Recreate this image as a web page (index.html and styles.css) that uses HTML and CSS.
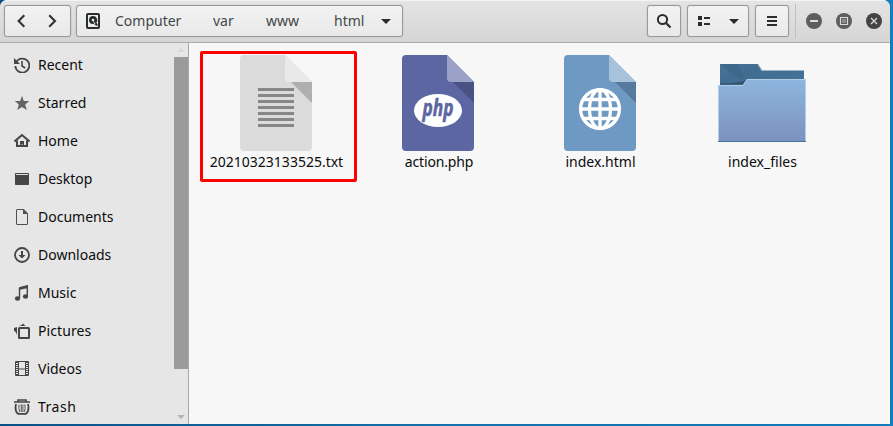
FILE: index.html
```html
<!DOCTYPE html>
<html lang="en">
<head>
<meta charset="utf-8">
<title>html</title>
<link rel="stylesheet" href="styles.css">
</head>
<body>
<main class="window">
  <header class="toolbar">
    <div class="group nav">
      <svg width="66" height="32" viewBox="0 0 66 32"><path d="M20.300 10.200 14.600 16l5.700 5.800M45.200 10.200 51 16l-5.800 5.800" fill="none" stroke="#2e3436" stroke-width="2.100"/></svg>
    </div>
    <nav class="group path">
      <svg class="disk" width="14" height="16" viewBox="0 0 14 16"><rect x="1" y="1" width="12" height="14" rx="1" fill="none" stroke="#292d2e" stroke-width="2"/><path d="M7 3a4 4 0 1 0 0 8l1-.1L10.500 13l1.400-1-1.500-2.500A4 4 0 0 0 7 3Z" fill="#292d2e"/><circle cx="7" cy="7" r="1.300" fill="#ededed"/><path d="m7.500 8.500 1.700 2.700" stroke="#ededed"/></svg>
      <span class="crumb computer">Computer</span><span class="crumb var">var</span><span class="crumb www">www</span><span class="crumb html">html</span>
      <svg class="arrow" width="10" height="5" viewBox="0 0 10 5"><path d="M0 0h10L5 5Z" fill="#292d2e"/></svg>
    </nav>
    <div class="group search"><svg width="16" height="16" viewBox="0 0 16 16"><circle cx="6.500" cy="6.500" r="4.600" fill="none" stroke="#292d2e" stroke-width="2"/><path d="m10 10 4.500 4.500" stroke="#292d2e" stroke-width="2.200"/></svg></div>
    <div class="group view">
      <svg width="12" height="10" viewBox="0 0 12 10"><path d="M0 0h4v4H0zM0 6h4v4H0zM6 1h6v2H6zM6 7h6v2H6z" fill="#292d2e"/></svg>
      <svg width="10" height="5" viewBox="0 0 10 5"><path d="M0 0h10L5 5Z" fill="#292d2e"/></svg>
    </div>
    <div class="group menu"><svg width="10" height="10" viewBox="0 0 10 10"><path d="M0 0h10v2H0zM0 4h10v2H0zM0 8h10v2H0z" fill="#292d2e"/></svg></div>
    <div class="controls">
      <svg width="16" height="16"><circle cx="8" cy="8" r="8" fill="#5d5d5d"/><path d="M4 7h8v2H4z" fill="#dcdcdc"/></svg>
      <svg width="16" height="16"><circle cx="8" cy="8" r="8" fill="#5d5d5d"/><path d="M4.500 4.500h7v7h-7z" fill="none" stroke="#dcdcdc" stroke-width="1.200"/><path d="M6 6h4v4H6z" fill="#8c8c8c"/></svg>
      <svg width="16" height="16"><circle cx="8" cy="8" r="8" fill="#444"/><path d="m5 5 6 6m0-6-6 6" stroke="#dcdcdc" stroke-width="1.300"/></svg>
    </div>
  </header>
  <div class="content">
    <aside class="sidebar">
      <ul class="places">
        <li><svg width="16" height="16" viewBox="0 0 16 16"><path d="M2 5.500A7 7 0 1 1 1.300 9" fill="none" stroke="#464646" stroke-width="1.800"/><path d="M0 1v6h6Z" fill="#464646"/><path d="M8 4v5l3.200 2" fill="none" stroke="#464646" stroke-width="1.600"/></svg><span>Recent</span></li>
        <li><svg width="16" height="16" viewBox="0 0 16 16"><path d="m8 .8 1.800 5.200 5.400.1L11.200 9.500l1.600 5.500L8 11.900 3.200 15l1.600-5.500L.8 6.100 6.200 6Z" fill="#646464"/></svg><span>Starred</span></li>
        <li><svg width="16" height="16" viewBox="0 0 16 16"><path d="M.5 8.500 8 2l7.500 6.500" fill="none" stroke="#464646" stroke-width="2"/><path d="M3 7.500V13h10V7.500" fill="none" stroke="#464646" stroke-width="2"/><path d="M6 8h4v5H8.500v-2h-1v2H6z" fill="#464646"/></svg><span>Home</span></li>
        <li><svg width="16" height="16" viewBox="0 0 16 16"><rect x="1" y="2" width="14" height="12" rx=".8" fill="#464646"/><path d="M2 3.500h12" stroke="#ddd"/></svg><span>Desktop</span></li>
        <li><svg width="16" height="16" viewBox="0 0 16 16"><path d="M3 .5h7l3.500 4V15q0 .5-.5.5H3q-.5 0-.5-.5V1q0-.5.5-.5Z" fill="none" stroke="#505050"/><path d="M9 0v5h5Z" fill="#505050"/></svg><span>Documents</span></li>
        <li><svg width="16" height="16" viewBox="0 0 16 16"><circle cx="8" cy="8" r="7" fill="none" stroke="#464646" stroke-width="1.800"/><path d="M7 4h2v4h2.500L8 11.500 4.500 8H7z" fill="#464646"/></svg><span>Downloads</span></li>
        <li><svg width="16" height="16" viewBox="0 0 16 16"><path d="M5.500 13V3.400L13.300 1v10.500" fill="none" stroke="#464646" stroke-width="1.400"/><path d="M5 2.200 14 0v3L5 5Z" fill="#464646"/><ellipse cx="3.500" cy="13.500" rx="2.600" ry="2.200" fill="#464646"/><ellipse cx="11.500" cy="11.500" rx="2.600" ry="2.200" fill="#464646"/></svg><span>Music</span></li>
        <li><svg width="16" height="16" viewBox="0 0 16 16"><rect x="5" y="5" width="10" height="10" rx=".5" fill="none" stroke="#464646" stroke-width="2"/><path d="M5 3q3-1 4-2.500L11.500 3ZM3 4v8Q2.500 9 0 7.500V5Z" fill="#464646"/></svg><span class="wide">Pictures</span></li>
        <li><svg width="16" height="16" viewBox="0 0 16 16"><path d="M1.500.5h13v14h-13zM4.500 1v14m7-14v14m-7-7h7" fill="none" stroke="#464646"/><path d="M3 1v14m10-14v14" stroke="#464646" stroke-width="2" stroke-dasharray="1 1"/></svg><span>Videos</span></li>
        <li><svg width="16" height="16" viewBox="0 0 16 16"><path d="M0 3h16M4 2.500V1h8v1.500" fill="none" stroke="#464646" stroke-width="1.600"/><path d="M2 5q-1.600 7 2 9.800h8q3.600-2.800 2-9.800" fill="none" stroke="#464646" stroke-width="1.800"/><path d="M5.200 5.500q-1 4 .6 7.500M10.800 5.500q1 4-.6 7.500M7.300 5.500V13M8.900 5.500V13" fill="none" stroke="#464646" stroke-width=".9"/></svg><span class="trash">Trash</span></li>
      </ul>
      <div class="scrollbar">
        <svg width="8" height="4"><path d="M0 4h8L4 0Z" fill="#d7d7d7"/></svg>
        <div class="thumb"></div>
        <svg width="8" height="4"><path d="M0 0h8L4 4Z" fill="#b5b5b5"/></svg>
      </div>
    </aside>
    <section class="files">
      <article class="file selected">
        <svg width="72" height="96" viewBox="0 0 72 96"><path d="M4 0h41l27 27v65a4 4 0 0 1-4 4H4a4 4 0 0 1-4-4V4a4 4 0 0 1 4-4Z" fill="#dbdbdb"/><path d="M51 27h21v21Z" fill="#afafaf"/><path d="M45 0l27 27H49a4 4 0 0 1-4-4Z" fill="#e9e9e9"/><path d="M18 34.500h36m-36 6h36m-36 6h36m-36 6h36m-36 6h36m-36 6h36m-36 6h36" stroke="#878787" stroke-width="3"/></svg>
        <span>20210323133525.txt</span>
      </article>
      <article class="file">
        <svg width="72" height="96" viewBox="0 0 72 96"><path d="M4 0h41l27 27v65a4 4 0 0 1-4 4H4a4 4 0 0 1-4-4V4a4 4 0 0 1 4-4Z" fill="#5b66a3"/><path d="M51 27h21v21Z" fill="#495282"/><path d="M45 0l27 27H49a4 4 0 0 1-4-4Z" fill="#9ba2c7"/><ellipse cx="36" cy="55.500" rx="24" ry="16.500" fill="#fff"/><text x="36" y="60.500" text-anchor="middle" class="php" textLength="31" lengthAdjust="spacingAndGlyphs">php</text></svg>
        <span class="tight">action.php</span>
      </article>
      <article class="file">
        <svg width="72" height="96" viewBox="0 0 72 96"><path d="M4 0h41l27 27v65a4 4 0 0 1-4 4H4a4 4 0 0 1-4-4V4a4 4 0 0 1 4-4Z" fill="#6e99c3"/><path d="M51 27h21v21Z" fill="#587a9c"/><path d="M45 0l27 27H49a4 4 0 0 1-4-4Z" fill="#a8c2db"/><g fill="none" stroke="#fff" stroke-width="3.300"><circle cx="36" cy="54" r="19.400"/><ellipse cx="36" cy="54" rx="10.500" ry="19.500"/><path d="M36 35v38M20 44.500h32M17 54h38M20 63.500h32"/></g></svg>
        <span>index.html</span>
      </article>
      <article class="file">
        <svg width="88" height="96" viewBox="0 0 88 96"><defs><linearGradient id="front" x2="0" y2="1"><stop stop-color="#8eb6de"/><stop offset="1" stop-color="#7b91bd"/></linearGradient><linearGradient id="back" x2="1" y2="1"><stop stop-color="#47749a"/><stop offset=".3" stop-color="#416d92"/><stop offset="1" stop-color="#47749a"/></linearGradient></defs><path d="M2 9h38l4 6h42v25H2Z" fill="url(#back)"/><path d="M2 9l20 15 4-1-6-14Z" fill="#3f6789"/><path d="M40 9.500l3.500 6H86" fill="none" stroke="#9ab5ca"/><path d="M2 29.500h23l4-5-5 2q-11 2-22 2Z" fill="#35566f"/><path d="M0 30h25l4-6h59v63H0Z" fill="url(#front)"/><path d="M.5 87V30.500H25l4-6h58.500V87" fill="none" stroke="#b2cde7"/><path d="M0 86.500h88" stroke="#4a709f"/></svg>
        <span>index_files</span>
      </article>
    </section>
  </div>
</main>
</body>
</html>
```
FILE: styles.css
```css
* { box-sizing: border-box; }
body { margin: 0; height: 426px; overflow: hidden; background: linear-gradient(90deg, #0b5288, #1876b0 50%, #1580c0); font: 14px/20px "Noto Sans", sans-serif; color: #0c0c0c; }
svg { display: block; flex: none; }
.window { display: flex; flex-direction: column; width: 890px; height: 424px; background: #f7f7f7; border-radius: 7px 7px 0 0; overflow: hidden; box-shadow: 0 0 1px #003b61; }
.toolbar { display: flex; flex: none; height: 43px; padding: 4px 0 0 4px; background: linear-gradient(#e4e4e4, #d5d5d5); border-top: 1px solid #f4f4f4; border-bottom: 1px solid #aaa; }
.group { display: flex; align-items: center; flex: none; height: 32px; border: 1px solid #999; border-radius: 3px; background: linear-gradient(#f2f2f2, #e9e9e9); box-shadow: 0 0 1px #888; }
.nav { width: 67px; }
.nav svg { margin-left: -1px; }
.path { width: 327px; margin-left: 5px; padding-left: 9px; color: #434748; }
.crumb { white-space: nowrap; }
.computer { width: 98px; margin-left: 15px; }
.var { width: 53px; }
.www { width: 68px; }
.html { width: 47px; }
.search { width: 34px; margin-left: 244px; justify-content: center; }
.view { width: 62px; margin-left: 6px; padding-left: 10px; gap: 19px; }
.menu { width: 34px; margin-left: 6px; justify-content: center; }
.controls { display: flex; align-items: center; gap: 14px; height: 34px; margin: -1px 0 0 6px; padding-left: 10px; border-left: 1px solid #c0c0c0; }
.content { display: flex; flex: 1; min-height: 0; }
.sidebar { display: flex; width: 189px; background: #e6e6e6; border-right: 1px solid #a7a7a7; }
.places { flex: 1; list-style: none; margin: 0; padding: 3px 0 0 14px; }
.places li { display: flex; align-items: center; gap: 8px; height: 38px; }
.wide { letter-spacing: .1px; }
.trash { letter-spacing: .5px; }
.scrollbar { display: flex; flex-direction: column; align-items: center; width: 14px; padding-top: 5px; }
.thumb { width: 14px; height: 312px; margin: 5px 0 46px; background: #9b9b9b; }
.files { display: flex; gap: 10px; padding: 8px 0 0 11px; }
.file { display: flex; flex-direction: column; align-items: center; width: 152px; height: 131px; padding-top: 4px; }
.file span { margin: 1px 0 0 1px; }
.file .tight { margin-left: 2px; letter-spacing: -.15px; }
.selected { width: 157px; margin-right: -5px; padding: 1px 5px 0 0; border: 3px solid red; border-radius: 2px; }
.php { font: italic bold 23px "Open Sans", sans-serif; fill: #5b66a3; stroke: #5b66a3; stroke-width: .6px; }
```
